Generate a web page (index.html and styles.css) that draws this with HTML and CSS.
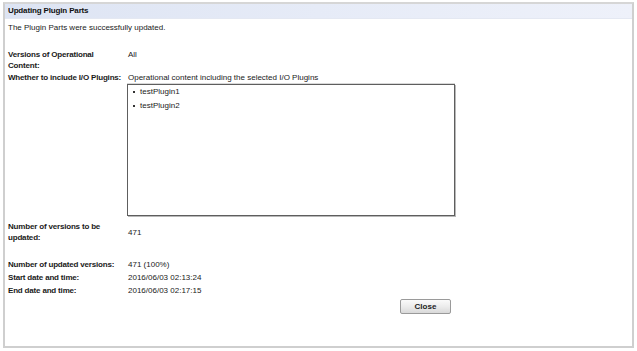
FILE: index.html
```html
<!DOCTYPE html>
<html>
<head>
<meta charset="utf-8">
<link rel="stylesheet" href="styles.css">
</head>
<body>
<div class="panel">
  <div class="panel-header">Updating Plugin Parts</div>
  <div class="panel-body">
    <div class="message">The Plugin Parts were successfully updated.</div>
    <div class="row row-top row-versions">
      <div class="label">Versions of Operational<br>Content:</div>
      <div class="value">All</div>
    </div>
    <div class="row row-top row-whether">
      <div class="label label-nowrap">Whether to include I/O Plugins:</div>
      <div class="value">Operational content including the selected I/O Plugins</div>
    </div>
    <div class="row row-box">
      <div class="label"></div>
      <ul class="plugin-list">
        <li>testPlugin1</li>
        <li>testPlugin2</li>
      </ul>
    </div>
    <div class="row row-center row-count">
      <div class="label">Number of versions to be<br>updated:</div>
      <div class="value">471</div>
    </div>
    <div class="row row-top row-updated">
      <div class="label">Number of updated versions:</div>
      <div class="value">471 (100%)</div>
    </div>
    <div class="row row-top row-date">
      <div class="label">Start date and time:</div>
      <div class="value">2016/06/03 02:13:24</div>
    </div>
    <div class="row row-top row-date">
      <div class="label">End date and time:</div>
      <div class="value">2016/06/03 02:17:15</div>
    </div>
    <div class="actions">
      <button class="btn" type="button">Close</button>
    </div>
  </div>
</div>
</body>
</html>
```
FILE: styles.css
```css
html, body {
  margin: 0;
  padding: 0;
  background: #ffffff;
}
body {
  padding: 2px 0 0 3px;
  font-family: "Liberation Sans", Arial, sans-serif;
  font-size: 8px;
  line-height: 11px;
  color: #1a1a1a;
}
.panel {
  width: 627px;
  height: 342px;
  border: 2px solid #cfcfcf;
  border-top-color: #d6d6d6;
  background: #ffffff;
  display: flex;
  flex-direction: column;
}
.panel-header {
  height: 14px;
  line-height: 14px;
  padding-left: 3px;
  font-weight: bold;
  letter-spacing: -0.15px;
  color: #111;
  background: linear-gradient(to right, #dde4f3 0%, #e6ebf7 50%, #eef1fa 100%);
  border-bottom: 1px solid #e4e8f2;
}
.panel-body {
  padding: 3px 0 0 3px;
  display: flex;
  flex-direction: column;
}
.row {
  display: flex;
}
.row-top { align-items: flex-start; }
.row-center { align-items: center; }
.label {
  width: 120px;
  flex: none;
  font-weight: bold;
  letter-spacing: -0.18px;
  box-sizing: border-box;
}
.label-nowrap {
  white-space: nowrap;
}
.value {
  flex: none;
}
.row-versions { margin-top: 16px; }
.row-whether { margin-top: 1px; }
.row-box { margin-top: 1px; }
.plugin-list {
  list-style: none;
  margin: 0 0 0 -1px;
  padding: 1px 0 0 4px;
  width: 322px;
  height: 129px;
  border: 1px solid #5e5e5e;
  box-shadow: 1px 1px 0 #b8b8b8, 0 -1px 0 #d8d8d8;
}
.plugin-list li {
  position: relative;
  padding-left: 8px;
  height: 14px;
  line-height: 11px;
}
.plugin-list li::before {
  content: "";
  position: absolute;
  left: 1px;
  top: 5px;
  width: 2px;
  height: 2px;
  background: #333;
}
.row-count { margin-top: 5px; }
.row-updated { margin-top: 16px; }
.row-date { margin-top: 2px; }
.actions {
  display: flex;
  margin-top: 3px;
  padding-left: 392px;
}
.btn {
  width: 51px;
  height: 15px;
  padding: 0;
  margin: 0;
  font-family: "Liberation Sans", Arial, sans-serif;
  font-size: 8px;
  font-weight: bold;
  color: #222;
  border: 1px solid #9a9a9a;
  border-radius: 2px;
  background: linear-gradient(to bottom, #fafafa 0%, #ececec 50%, #d9d9d9 100%);
}
```
